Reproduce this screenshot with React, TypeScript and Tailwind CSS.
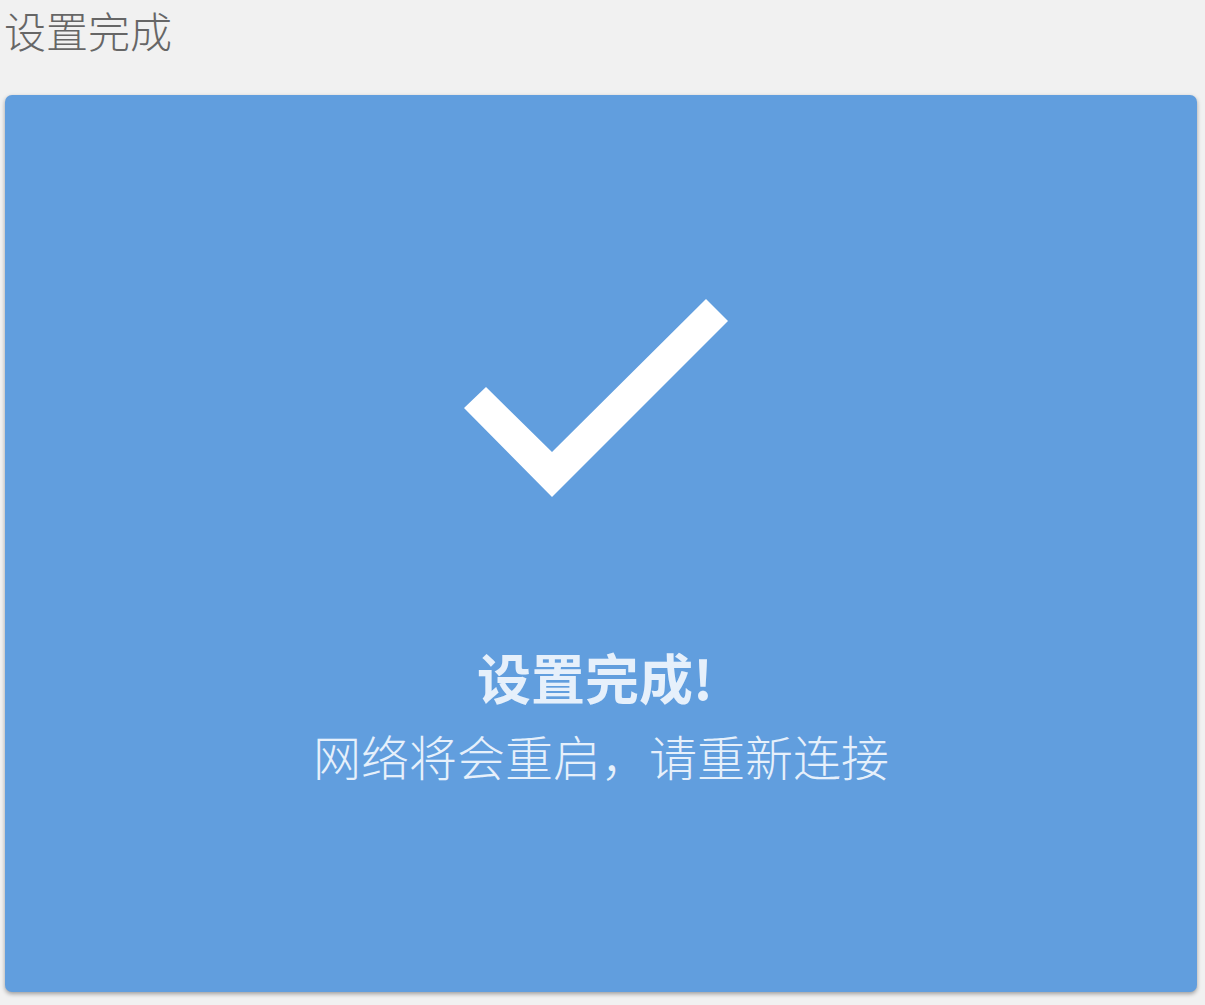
import React from "react";

const CheckMark = () => (
  <svg width="264" height="198" viewBox="0 0 264 198" className="block">
    {/* origin at (464, 299) in the page */}
    <polygon
      points="0,109 22,88 88,153 242,0 264,22 88,198"
      fill="#ffffff"
    />
  </svg>
);

const App = () => {
  return (
    <div
      className="min-h-screen w-full bg-[#f1f1f1] pl-[5px] pr-[8px] pt-[2px] pb-[13px]"
      style={{ fontFamily: '"Noto Sans CJK SC", "Noto Sans", sans-serif' }}
    >
      {/* page title */}
      <h1 className="text-[42px] leading-[56px] font-light text-[#666666] -ml-[1px]">
        设置完成
      </h1>

      {/* result card */}
      <div className="mt-[37px] h-[897px] rounded-[7px] bg-[#619ede] shadow-[0_2px_4px_rgba(0,0,0,0.35)] flex flex-col items-center">
        <div className="mt-[204px] mr-[11px]">
          <CheckMark />
        </div>
        <h2 className="mt-[150px] mr-[12px] text-[54px] leading-[60px] font-bold text-[#e6f0fb]">
          设置完成!
        </h2>
        <p className="mt-[18px] text-[48px] leading-[60px] font-light text-[#e6f0fb]">
          网络将会重启，请重新连接
        </p>
      </div>
    </div>
  );
};

export default App;
